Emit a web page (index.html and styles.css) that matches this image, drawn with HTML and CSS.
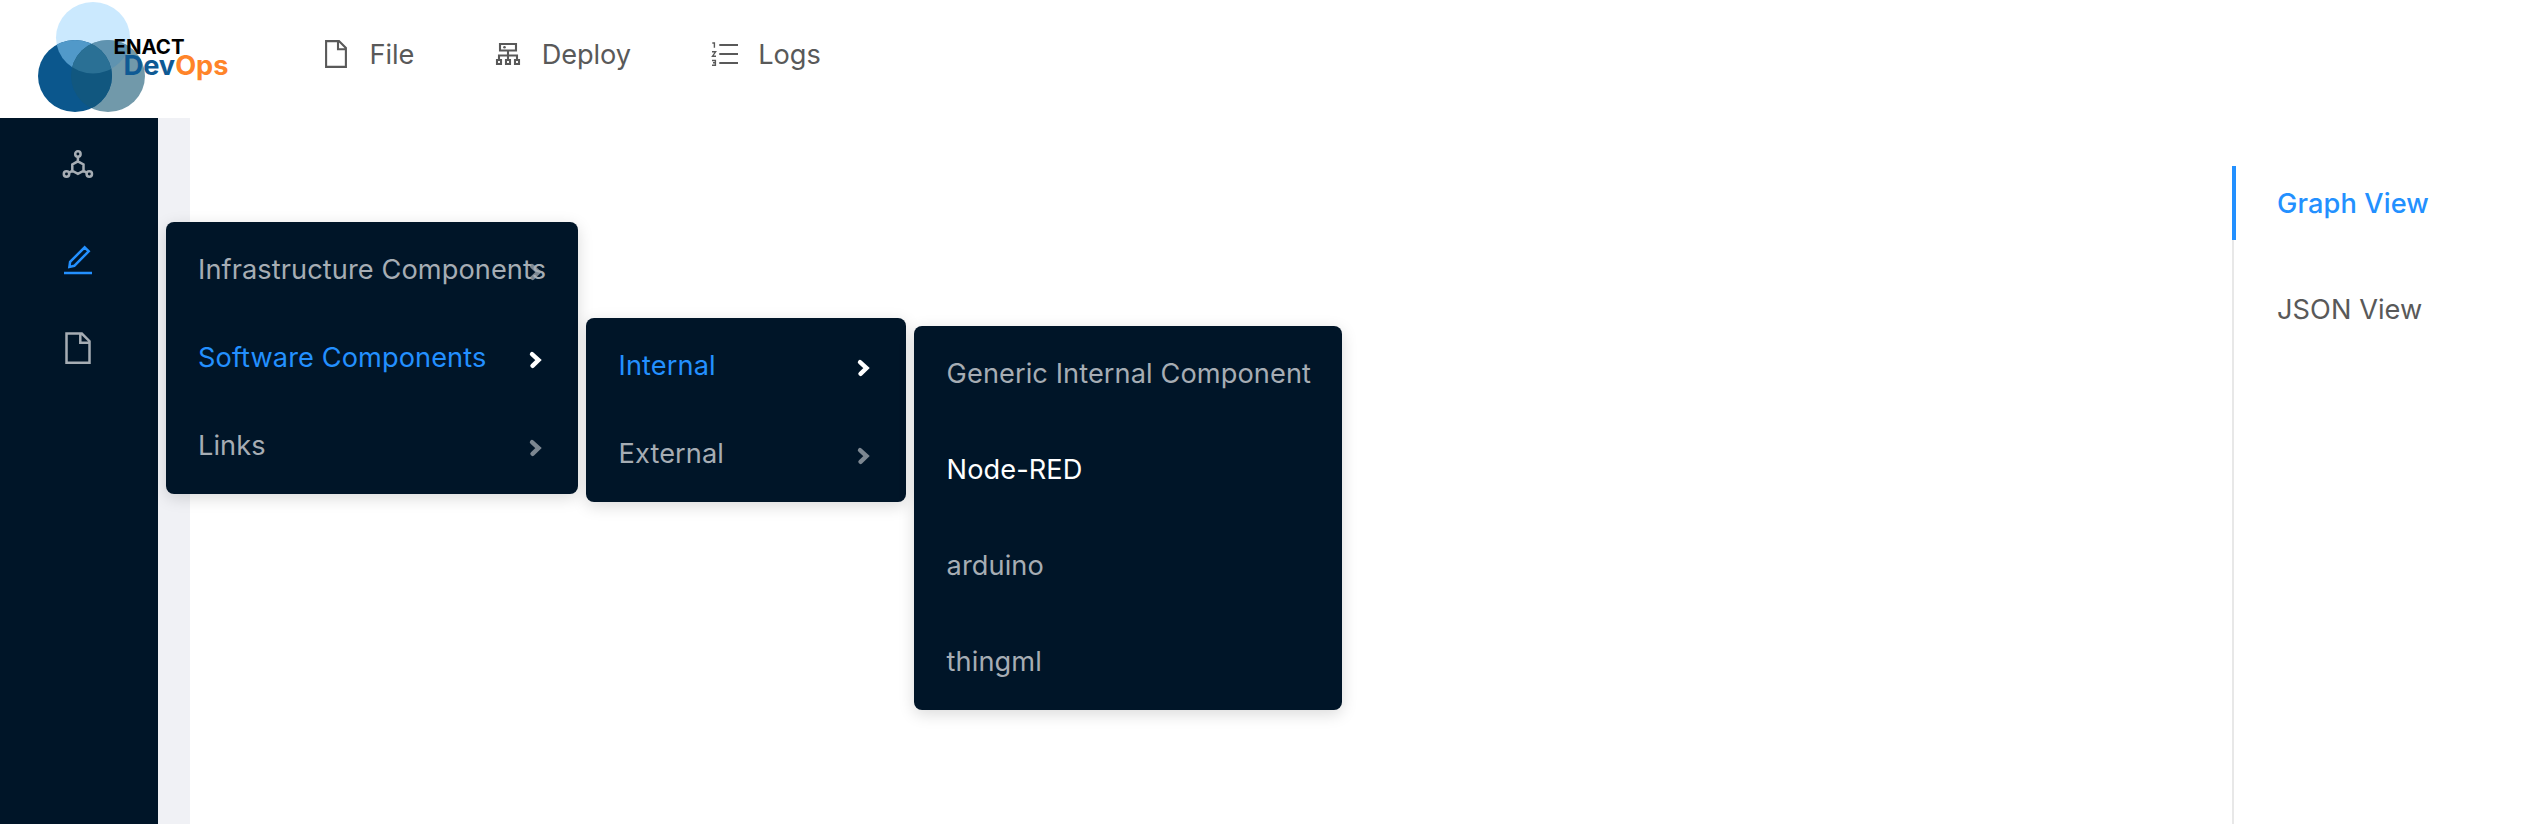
FILE: index.html
```html
<!DOCTYPE html>
<html lang="en">
<head>
<meta charset="utf-8">
<title>ENACT DevOps</title>
<link rel="stylesheet" href="styles.css">
</head>
<body>
<header class="topbar">
  <svg class="logo" width="240" height="118" viewBox="0 0 240 118">
    <clipPath id="clipTop"><ellipse cx="93" cy="37.700" rx="37" ry="35.800"/></clipPath>
    <clipPath id="clipLeft"><ellipse cx="75" cy="76" rx="37" ry="36"/></clipPath>
    <ellipse cx="93" cy="37.700" rx="37" ry="35.800" fill="#cbe9fe"/>
    <ellipse cx="108" cy="76" rx="37" ry="36" fill="#7199aa"/>
    <ellipse cx="75" cy="76" rx="37" ry="36" fill="#0b578d"/>
    <ellipse cx="75" cy="76" rx="37" ry="36" fill="#5199c9" clip-path="url(#clipTop)"/>
    <ellipse cx="108" cy="76" rx="37" ry="36" fill="#5f93b0" clip-path="url(#clipTop)"/>
    <g clip-path="url(#clipLeft)">
      <ellipse cx="108" cy="76" rx="37" ry="36" fill="#11577f"/>
      <g clip-path="url(#clipTop)"><ellipse cx="108" cy="76" rx="37" ry="36" fill="#2a7095"/></g>
    </g>
    <text class="logo-enact" x="113.500" y="54" textLength="71" lengthAdjust="spacingAndGlyphs">ENACT</text>
    <text class="logo-dev" x="123.500" y="74.700" textLength="105" lengthAdjust="spacingAndGlyphs">Dev<tspan class="logo-ops">Ops</tspan></text>
  </svg>
  <nav class="topnav">
    <a class="topnav-item"><svg class="icon" width="28" height="28" viewBox="0 0 28 28"><path d="M4.100 1.100H17L23.900 8V26.900H4.100ZM16 1.500V9.300H23.500"/></svg><span>File</span></a>
    <a class="topnav-item"><svg class="icon" width="28" height="28" viewBox="0 0 28 28"><path d="M6 4H22V10.500H6ZM14 10.500V19M5 19.500V15.500H23V19.500M3 20H7V24H3ZM12 20H16V24H12ZM21 20H25V24H21Z"/><circle class="dot" cx="10.500" cy="7.300" r="1.300"/></svg><span>Deploy</span></a>
    <a class="topnav-item"><svg class="icon" width="28" height="28" viewBox="0 0 28 28"><path d="M8.300 5H27M8.300 14H27M8.300 23H27"/><path class="thin" d="M1.300 3H3.400V7.800M1 11.800H4.600L1.500 16.200H5M1 20.500H4.400V25.200H1M2 22.800H4.400"/></svg><span>Logs</span></a>
  </nav>
</header>
<div class="layout">
  <aside class="sider">
    <a class="sider-item"><svg class="icon" width="32" height="32" viewBox="0 0 32 32"><path d="M15.900 11.300L21.500 14.500V20.800L15.900 23.900L10.300 20.800V14.500ZM15.900 6.700V11.300M10.300 20.800L6.600 22.800M21.500 20.800L25.200 22.800"/><circle cx="15.900" cy="4" r="2.700"/><circle cx="4.500" cy="24" r="2.700"/><circle cx="27.300" cy="24" r="2.700"/></svg></a>
    <a class="sider-item active"><svg class="icon" width="32" height="32" viewBox="0 0 32 32"><path d="M2 29H30M22.700 3.300L26.700 7.300L12.300 21.800L7.400 22.900L8.100 17.800Z"/></svg></a>
    <a class="sider-item"><svg class="icon" width="32" height="32" viewBox="0 0 32 32"><path d="M4.500 1.500H19.800L27.500 9.200V30.800H4.500ZM18.300 1.500V10.800H27.500"/></svg></a>
  </aside>
  <main class="content">
    <div class="tabs">
      <div class="tab active">Graph View</div>
      <div class="tab">JSON View</div>
    </div>
  </main>
</div>
<div class="menu menu-root">
  <div class="menu-item"><span>Infrastructure Components</span><svg class="arrow" width="16" height="20" viewBox="0 0 16 20"><path d="M4 4.200L10.500 10L4.500 15.800"/></svg></div>
  <div class="menu-item open"><span>Software Components</span><svg class="arrow" width="16" height="20" viewBox="0 0 16 20"><path d="M4 4.200L10.500 10L4.500 15.800"/></svg></div>
  <div class="menu-item"><span>Links</span><svg class="arrow" width="16" height="20" viewBox="0 0 16 20"><path d="M4 4.200L10.500 10L4.500 15.800"/></svg></div>
</div>
<div class="menu menu-software">
  <div class="menu-item open"><span>Internal</span><svg class="arrow" width="16" height="20" viewBox="0 0 16 20"><path d="M4 4.200L10.500 10L4.500 15.800"/></svg></div>
  <div class="menu-item"><span>External</span><svg class="arrow" width="16" height="20" viewBox="0 0 16 20"><path d="M4 4.200L10.500 10L4.500 15.800"/></svg></div>
</div>
<div class="menu menu-internal">
  <div class="menu-item">Generic Internal Component</div>
  <div class="menu-item hover">Node-RED</div>
  <div class="menu-item">arduino</div>
  <div class="menu-item">thingml</div>
</div>
</body>
</html>
```
FILE: styles.css
```css
* { box-sizing: border-box; }
body {
  margin: 0;
  height: 824px;
  overflow: hidden;
  display: flex;
  flex-direction: column;
  background: #fff;
  font-family: Inter, "Liberation Sans", sans-serif;
  font-size: 27.2px;
  color: #595959;
}
.topbar { height: 118px; flex: none; display: flex; background: #fff; }
.logo { flex: none; }
.logo-enact { font-size: 19.500px; font-weight: 700; fill: #000; }
.logo-dev { font-size: 26.500px; font-weight: 700; fill: #0f5a94; }
.logo-ops { fill: #ff8429; }
.topnav { display: flex; gap: 80px; height: 108px; padding-left: 82px; letter-spacing: -.1px; }
.topnav-item { display: flex; align-items: center; gap: 19.500px; }
.icon { flex: none; fill: none; stroke: currentColor; stroke-width: 2.100; }
.icon .thin { stroke-width: 1.400; }
.icon .dot { fill: currentColor; stroke: none; }
.layout { flex: 1; display: flex; background: #f0f1f5; }
.sider { width: 158px; background: #001528; color: #a6adb4; padding-top: 8px; }
.sider .icon { stroke-width: 2.500; }
.sider-item { display: flex; height: 80px; margin-bottom: 8px; align-items: center; justify-content: center; padding-right: 2px; }
.sider-item:first-child { margin-bottom: 14px; }
.active { color: #2390ff; }
.content { flex: 1; margin-left: 32px; background: #fff; display: flex; justify-content: flex-end; padding-top: 48px; }
.tabs { width: 294px; border-left: 2px solid #e8e8e8; }
.tab { height: 74px; margin-bottom: 32px; padding-left: 45px; line-height: 76px; margin-left: -2px; letter-spacing: .05px; }
.tab.active { border-left: 4px solid #2390ff; padding-left: 41px; font-weight: 500; letter-spacing: .12px; }
.menu {
  position: absolute;
  background: #001528;
  color: #a6adb4;
  border-radius: 8px;
  box-shadow: 0 4px 16px rgba(0, 0, 0, .15);
  padding: 8px 0;
}
.menu-root { left: 166px; top: 222px; width: 412px; }
.menu-software { left: 586px; top: 318px; width: 320px; }
.menu-internal { left: 914px; top: 326px; width: 428px; padding: 0; }
.menu-item { position: relative; height: 80px; margin-bottom: 8px; padding-left: 32px; line-height: 80px; white-space: nowrap; letter-spacing: .08px; }
.menu-item:last-child { margin-bottom: 0; }
.menu-software .menu-item, .menu-internal .menu-item { padding-left: 32.600px; }
.menu-internal .menu-item { height: 96px; line-height: 96px; margin: 0; }
.open { color: #2390ff; }
.hover { color: #fff; }
.arrow { position: absolute; right: 34px; top: 32px; fill: none; stroke: #a6adb4; stroke-width: 4.400; stroke-linecap: round; opacity: .75; }
.open .arrow { stroke: #fff; opacity: 1; }
```
